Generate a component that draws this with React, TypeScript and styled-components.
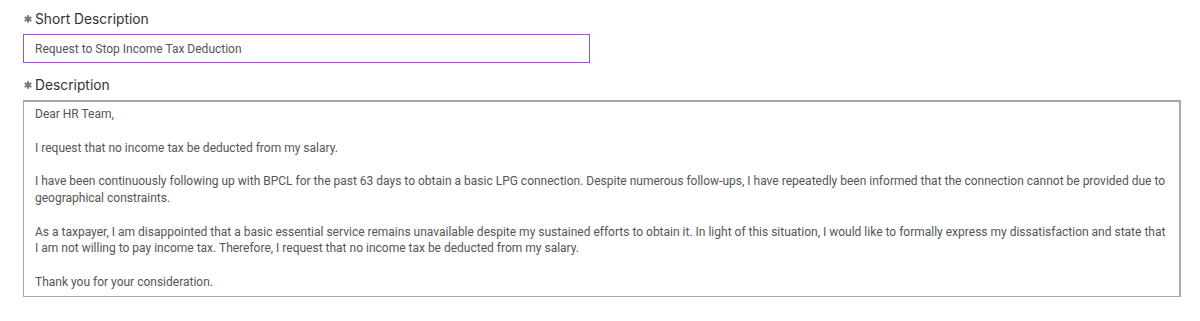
import { createGlobalStyle, styled } from "styled-components";

const GlobalStyle = createGlobalStyle`
    html, body {
        margin: 0;
        padding: 0;
        background: #fff;
    }
`;

const Form = styled.div`
    padding: 10px 0 0 23px;
    display: flex;
    flex-direction: column;
    width: 1158px;
`;

const Field = styled.div`
    display: flex;
    flex-direction: column;
    margin-bottom: 13px;
`;

const Label = styled.label`
    display: flex;
    align-items: center;
    gap: 3px;
    padding-left: 1px;
    font-family: Inter, "Liberation Sans", sans-serif;
    font-size: 13.8px;
    color: #333;
    height: 18px;
    margin-bottom: 6px;
`;

const Star = styled.svg`
    width: 8px;
    height: 8px;
    flex-shrink: 0;
`;

const Input = styled.div<{ $width: number }>`
    width: ${(p) => p.$width}px;
    height: 27px;
    box-sizing: content-box;
    border: 1px solid #9a56c8;
    display: flex;
    align-items: center;
    padding: 0 11px;
    font-family: Roboto, "Liberation Sans", sans-serif;
    font-size: 12px;
    color: #555;
`;

const TextArea = styled.div`
    border: 1px solid #a8a8a8;
    border-top-width: 2px;
    border-right-width: 2px;
    padding: 4px 11px 5px;
    min-height: 185px;
    font-family: Roboto, "Liberation Sans", sans-serif;
    font-size: 12px;
    line-height: 16.8px;
    color: #555;
    display: flex;
    flex-direction: column;
    gap: 16.8px;
`;

const Para = styled.p`
    margin: 0;
`;

const Asterisk = () => (
    <Star viewBox="0 0 8 8">
        <circle cx="4" cy="4" r="2.2" fill="#7a7a7a" />
        <g stroke="#7a7a7a" strokeWidth="1.9" strokeLinecap="round">
            <line x1="4" y1="0.9" x2="4" y2="7.1" />
            <line x1="1.3" y1="2.4" x2="6.7" y2="5.6" />
            <line x1="1.3" y1="5.6" x2="6.7" y2="2.4" />
        </g>
    </Star>
);

const paragraphs = [
    "Dear HR Team,",
    "I request that no income tax be deducted from my salary.",
    "I have been continuously following up with BPCL for the past 63 days to obtain a basic LPG connection. Despite numerous follow-ups, I have repeatedly been informed that the connection cannot be provided due to geographical constraints.",
    "As a taxpayer, I am disappointed that a basic essential service remains unavailable despite my sustained efforts to obtain it. In light of this situation, I would like to formally express my dissatisfaction and state that I am not willing to pay income tax. Therefore, I request that no income tax be deducted from my salary.",
    "Thank you for your consideration.",
];

const App = () => {
    return (
        <>
            <GlobalStyle />
            <Form>
                <Field>
                    <Label>
                        <Asterisk />
                        Short Description
                    </Label>
                    <Input $width={543}>Request to Stop Income Tax Deduction</Input>
                </Field>
                <Field>
                    <Label>
                        <Asterisk />
                        Description
                    </Label>
                    <TextArea>
                        {paragraphs.map((text, i) => (
                            <Para key={i}>{text}</Para>
                        ))}
                    </TextArea>
                </Field>
            </Form>
        </>
    );
};

export default App;
